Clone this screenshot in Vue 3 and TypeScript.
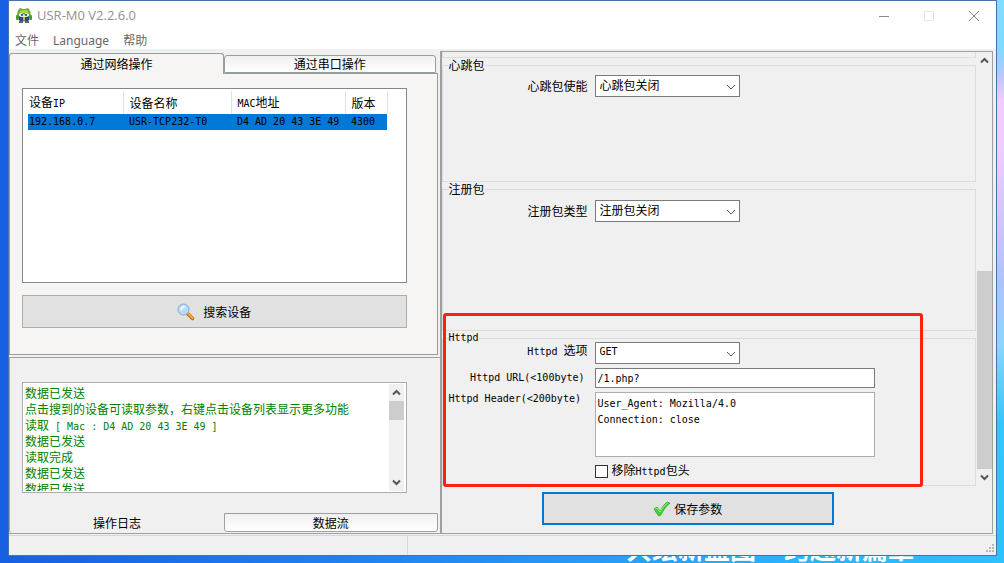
<script setup lang="ts">
import { h, ref, type FunctionalComponent } from 'vue'

interface Device {
  ip: string
  name: string
  mac: string
  version: string
}

// Sets Latin runs in the half-width face beside full-width characters.
const MixedText: FunctionalComponent<{ text: string }> = (props) =>
  props.text
    .split(/([\x20-\x7e]+)/)
    .filter((part) => part.length > 0)
    .map((part) => h('span', { class: /^[\x20-\x7e]/.test(part) ? 'half' : 'full' }, part))
MixedText.props = ['text']

const menus = ['文件', 'Language', '帮助']
const columns = ['设备IP', '设备名称', 'MAC地址', '版本']
const devices: Device[] = [
  { ip: '192.168.0.7', name: 'USR-TCP232-T0', mac: 'D4 AD 20 43 3E 49', version: '4300' },
]
const logLines = [
  '数据已发送',
  '点击搜到的设备可读取参数，右键点击设备列表显示更多功能',
  '读取 [ Mac : D4 AD 20 43 3E 49 ]',
  '数据已发送',
  '读取完成',
  '数据已发送',
  '数据已发送',
]

const heartbeat = ref('心跳包关闭')
const register = ref('注册包关闭')
const method = ref('GET')
const url = ref('/1.php?')
const header = ref('User_Agent: Mozilla/4.0\nConnection: close')
const strip = ref(false)
</script>

<template>
  <div class="desktop">
    <p class="slogan"><span>共绘新蓝图</span><span>跨越新篇章</span></p>
    <div class="window">
      <header class="titlebar">
        <svg class="app-icon" viewBox="0 0 16 16" aria-hidden="true">
          <path d="M1 10C1 4 3 2 4 1l3 1h2l3-1c1 1 3 3 3 9z" fill="#6fae33" />
          <path d="M4 4q4-2 8 0v2H4z" fill="#a8d458" />
          <rect x="0" y="8" width="3" height="5" rx="1" fill="#4c9a35" />
          <rect x="13" y="8" width="3" height="5" rx="1" fill="#4c9a35" />
          <path d="M3 9h10v4l-2 2H9l-1-2-1 2H5l-2-2z" fill="#294c7d" />
          <path d="M3 7q2-2 4 0t2 0 4 0v2l-2 1H5L3 9z" fill="#e9efc0" />
          <path d="M5 7h2v2H5zM9 7h2v2H9z" fill="#3d6a8c" />
          <path d="M7 10h2v3H7z" fill="#d8b25a" />
          <path d="M3 14h4v2H3zM9 14h4v2H9z" fill="#5c6470" />
        </svg>
        <h1>USR-M0 V2.2.6.0</h1>
        <div class="caption">
          <button type="button" aria-label="Minimize">
            <svg viewBox="0 0 12 12"><path d="M1 6.500h10" stroke="#8a8a8a" /></svg>
          </button>
          <button type="button" aria-label="Maximize" disabled>
            <svg viewBox="0 0 12 12"><path d="M1.500 1.500h9v9h-9z" fill="none" stroke="#e6e6e6" /></svg>
          </button>
          <button type="button" aria-label="Close">
            <svg viewBox="0 0 12 12"><path d="M1 1l10 10M11 1L1 11" stroke="#858585" /></svg>
          </button>
        </div>
      </header>
      <nav class="menubar">
        <button v-for="m in menus" :key="m" type="button">{{ m }}</button>
      </nav>

      <main class="main">
        <section class="left">
          <div class="tabs top" role="tablist">
            <button type="button" role="tab" aria-selected="true" class="tab active">通过网络操作</button>
            <button type="button" role="tab" aria-selected="false" class="tab">通过串口操作</button>
          </div>
          <div class="search-pane">
            <div class="list">
              <table>
                <thead>
                  <tr>
                    <th v-for="c in columns" :key="c" scope="col"><MixedText :text="c" /></th>
                    <th class="rest" aria-hidden="true"></th>
                  </tr>
                </thead>
                <tbody>
                  <tr v-for="d in devices" :key="d.ip">
                    <td>{{ d.ip }}</td>
                    <td>{{ d.name }}</td>
                    <td>{{ d.mac }}</td>
                    <td>{{ d.version }}</td>
                    <td class="rest"></td>
                  </tr>
                </tbody>
              </table>
            </div>
            <button type="button" class="search">
              <svg width="18" height="18" viewBox="0 0 18 18" aria-hidden="true">
                <path d="M11 11l4.500 4.500" stroke="#b96f16" stroke-width="3.500" stroke-linecap="round" />
                <path d="M11.500 11l4 4" stroke="#f5a92e" stroke-width="2" stroke-linecap="round" />
                <circle cx="6.500" cy="6.500" r="5.500" fill="#b5dcf8" stroke="#8fa5cc" />
                <path d="M3 6q1-3 4-3.500l1.500 2Q5 5 4 8z" fill="#eef8ff" />
              </svg>
              <span>搜索设备</span>
            </button>
          </div>

          <div class="log-pane">
            <div class="log">
              <div class="log-text" role="log">
                <p v-for="(line, i) in logLines" :key="i"><MixedText :text="line" /></p>
              </div>
              <div class="scroll">
                <button type="button" aria-label="Scroll up">
                  <svg viewBox="0 0 9 9"><path d="M1 6.500L4.500 3 8 6.500" /></svg>
                </button>
                <div class="thumb small"></div>
                <button type="button" class="end" aria-label="Scroll down">
                  <svg viewBox="0 0 9 9"><path d="M1 2.500L4.500 6 8 2.500" /></svg>
                </button>
              </div>
            </div>
          </div>
          <div class="tabs bottom" role="tablist">
            <button type="button" role="tab" aria-selected="true" class="tab active">操作日志</button>
            <button type="button" role="tab" aria-selected="false" class="tab">数据流</button>
          </div>
        </section>

        <form class="right" @submit.prevent>
          <div class="params">
            <div class="groups">
              <div class="group-tail"></div>
              <fieldset class="heartbeat">
                <legend>心跳包</legend>
                <div class="row">
                  <label for="heartbeat">心跳包使能</label>
                  <div class="select">
                    <select id="heartbeat" v-model="heartbeat"><option>心跳包关闭</option></select>
                    <svg viewBox="0 0 10 6"><path d="M1 1l4 4 4-4" /></svg>
                  </div>
                </div>
              </fieldset>
              <fieldset class="register">
                <legend>注册包</legend>
                <div class="row">
                  <label for="register">注册包类型</label>
                  <div class="select">
                    <select id="register" v-model="register"><option>注册包关闭</option></select>
                    <svg viewBox="0 0 10 6"><path d="M1 1l4 4 4-4" /></svg>
                  </div>
                </div>
              </fieldset>
              <div class="marked">
                <fieldset class="httpd">
                  <legend class="half">Httpd</legend>
                  <div class="row">
                    <label for="method" class="raised"><MixedText text="Httpd 选项" /></label>
                    <div class="select">
                      <select id="method" v-model="method" class="half"><option>GET</option></select>
                      <svg viewBox="0 0 10 6"><path d="M1 1l4 4 4-4" /></svg>
                    </div>
                  </div>
                  <div class="row">
                    <label for="url" class="half inset">Httpd URL(&lt;100byte)</label>
                    <input id="url" v-model="url" type="text" class="half" />
                  </div>
                  <div class="row start">
                    <label for="header" class="half wide">Httpd Header(&lt;200byte)</label>
                    <textarea id="header" v-model="header" class="half" spellcheck="false"></textarea>
                  </div>
                  <div class="row">
                    <label class="check"><input v-model="strip" type="checkbox" /><span><MixedText text="移除Httpd包头" /></span></label>
                  </div>
                </fieldset>
                <div class="marker"></div>
              </div>
            </div>
            <div class="scroll">
              <button type="button" aria-label="Scroll up">
                <svg viewBox="0 0 9 9"><path d="M1 6.500L4.500 3 8 6.500" /></svg>
              </button>
              <div class="track"></div>
              <div class="thumb large"></div>
              <button type="button" class="end" aria-label="Scroll down">
                <svg viewBox="0 0 9 9"><path d="M1 2.500L4.500 6 8 2.500" /></svg>
              </button>
            </div>
          </div>
          <div class="actions">
            <button type="submit" class="save">
              <svg width="18" height="16" viewBox="0 0 18 16" aria-hidden="true">
                <path d="M1 8l3-2 3 4q3-6 7-9l3 1Q11 7 7.500 14.500L5.500 15z" fill="#40cf35" stroke="#2f9f2b" stroke-width=".7" stroke-linejoin="round" />
                <path d="M2.500 8l1.500-.8L7 11q3-6 7.500-9" stroke="#98ef83" fill="none" />
              </svg>
              <span>保存参数</span>
            </button>
          </div>
        </form>
      </main>
      <footer class="status">
        <div></div>
        <div>
          <svg width="9" height="9" viewBox="0 0 9 9" aria-hidden="true">
            <path d="M6 0h2v2H6zM3 3h2v2H3zM6 3h2v2H6zM0 6h2v2H0zM3 6h2v2H3zM6 6h2v2H6z" fill="#b8b8b8" />
          </svg>
        </div>
      </footer>
    </div>
  </div>
</template>

<style>
body {
  margin: 0;
}
</style>

<style scoped>
.desktop,
.desktop * {
  box-sizing: border-box;
}
.desktop {
  position: relative;
  display: flex;
  min-height: 100vh;
  padding: 0 7px 7px 8px;
  overflow: hidden;
  background:
    linear-gradient(170deg, #86dcff 0, #83d8ff 50px, #b9c6f8 75px, #f0cdf8 100px, #f0cdf8 150px, #c5c3f8 240px, #a9c4f8 285px, #8fd3fb 340px, #35c5fb 420px, #2cc0fd 100%) right / 8px 100% no-repeat,
    linear-gradient(90deg, #165fe3 0, #1c72ec 20%, #2490f4 50%, #29b4fb 80%, #2cc0fd 100%);
  font: 12px/14px "Noto Sans CJK SC", sans-serif;
  color: #000;
}
button,
input,
select,
textarea {
  margin: 0;
  font: inherit;
  color: inherit;
}
button {
  padding: 0;
  border: 0;
  background: none;
}
.half,
:deep(.half) {
  font-family: "DejaVu Sans Mono", "Liberation Mono", monospace;
  font-size: 10px;
  white-space: pre;
}
.slogan {
  position: absolute;
  right: 90px;
  bottom: 0;
  display: flex;
  gap: 28px;
  margin: 0;
  font-size: 26px;
  line-height: 30px;
  font-weight: 700;
  color: #fff;
}
.window {
  position: relative;
  display: flex;
  flex: 1;
  flex-direction: column;
  min-width: 0;
  border: 1px solid #4673a8;
  background: #f0f0f0;
}
.titlebar {
  display: flex;
  align-items: center;
  height: 28px;
  padding-left: 7px;
  background: #fff;
}
.app-icon {
  width: 16px;
  height: 16px;
}
h1 {
  flex: 1;
  margin: 0 0 0 5px;
  font: 13px/16px "Open Sans", sans-serif;
  color: #929292;
}
.caption {
  display: flex;
  align-self: stretch;
}
.caption button {
  width: 45px;
}
.caption svg {
  width: 12px;
  height: 12px;
  vertical-align: middle;
}
.menubar {
  display: flex;
  gap: 14px;
  height: 20px;
  padding: 4px 6px 0;
  background: #fff;
  font: 12px/16px "Noto Sans", "Noto Sans CJK SC", sans-serif;
  color: #666;
}
.main {
  display: grid;
  flex: 1;
  grid-template-columns: minmax(0, 7fr) minmax(0, 9fr);
  padding: 2px 3px 1px 0;
}
.left {
  display: flex;
  flex-direction: column;
  background: #f0f0f0;
}
.tabs {
  display: grid;
  grid-template-columns: 215px minmax(0, 1fr);
}
.tab {
  position: relative;
  border: 1px solid #939f9c;
  background: linear-gradient(#f0f0f0, #fff);
}
.tabs.top {
  height: 20px;
  margin: 2px 4px 0 0;
}
.tabs.top .tab {
  margin-top: 2px;
  border-radius: 3px 3px 0 0;
}
.tabs.top .active {
  z-index: 1;
  margin: 0 0 -1px;
  border-bottom: 0;
  background: #f7f5f3;
}
.search-pane {
  flex: 1;
  display: flex;
  flex-direction: column;
  margin-right: 2px;
  padding: 14px 30px 26px 12px;
  border: 1px solid #939f9c;
  background: #f7f5f3;
}
.list {
  flex: 1;
  padding: 2px 5px;
  border: 1px solid #82878f;
  background: #fff;
}
table {
  width: 100%;
  border-collapse: collapse;
  table-layout: fixed;
}
th,
td {
  padding: 0 0 0 6px;
  text-align: left;
  font-weight: 400;
  white-space: nowrap;
}
th:first-child,
td:first-child {
  width: 95px;
  padding-left: 1px;
}
th:nth-child(2) {
  width: 108px;
}
th:nth-child(3) {
  width: 114px;
}
th:nth-child(4) {
  width: 42px;
}
th {
  height: 23px;
  border-right: 1px solid #e3e3e3;
}
.rest {
  border: 0;
  padding: 0;
}
td {
  height: 16px;
  background: #0078d7;
  font: 10px/16px "DejaVu Sans Mono", monospace;
}
td.rest {
  background: none;
}
.search {
  display: flex;
  align-items: center;
  justify-content: center;
  gap: 8px;
  height: 33px;
  margin-top: 12px;
  border: 1px solid #adadad;
  background: #e1e1e1;
}
.log-pane {
  flex: none;
  display: flex;
  margin-top: 2px;
  padding: 24px 33px 20px 12px;
  border: solid #a0a0a0;
  border-width: 1px 0 0 1px;
}
.log {
  display: flex;
  flex: 1;
  min-width: 0;
  height: 111px;
  padding: 1px 2px 1px 1px;
  border: 1px solid #abadb3;
  background: #fff;
}
.log-text {
  flex: 1;
  height: 107px;
  overflow: hidden;
  color: #008000;
}
.log-text p {
  height: 16px;
  margin: 0;
  padding-left: 1px;
  line-height: 18px;
  white-space: nowrap;
}
.scroll {
  display: flex;
  flex: none;
  flex-direction: column;
  width: 15px;
  background: #f0f0f0;
}
.scroll button {
  height: 17px;
}
.scroll .end {
  margin-top: auto;
}
.scroll svg {
  display: block;
  width: 9px;
  height: 9px;
  margin: 0 auto;
  fill: none;
  stroke: #555;
  stroke-width: 2;
}
.thumb {
  background: #cdcdcd;
}
.small {
  height: 19px;
}
.track {
  flex: 202;
}
.large {
  flex: 199;
}
.tabs.bottom {
  height: 21px;
  padding-right: 2px;
  border-bottom: 1px solid #a0a0a0;
}
.tabs.bottom .tab {
  margin-bottom: 1px;
  border-color: #a0a0a0;
  border-radius: 0 0 3px 3px;
}
.tabs.bottom .active {
  margin-bottom: 0;
  border-top: 0;
  border-bottom: 0;
  border-right: 0;
  background: #f0f0f0;
}
.right {
  display: flex;
  flex-direction: column;
  border: 1px solid #a0a0a0;
  border-left-width: 2px;
}
.params {
  display: flex;
}
.groups {
  flex: 1;
  min-width: 0;
  margin-right: 1px;
}
.group-tail {
  height: 6px;
  border: 1px solid #dcdcdc;
  border-top: 0;
}
fieldset {
  min-width: 0;
  margin: 0;
  padding: 0 6px;
  border: 1px solid #dcdcdc;
}
legend {
  height: 14px;
  padding: 0;
  line-height: 14px;
}
.heartbeat {
  min-height: 124px;
  padding-top: 3px;
}
.register {
  min-height: 149px;
  padding-top: 4px;
}
.httpd {
  min-height: 155px;
  padding-bottom: 2px;
}
.row {
  display: grid;
  grid-template-columns: 139px minmax(0, 280px);
  column-gap: 7px;
  align-items: center;
}
.httpd legend + .row {
  margin-top: -3px;
}
.httpd .row + .row {
  margin-top: 4px;
}
.row.start {
  align-items: start;
}
label {
  text-align: right;
  white-space: nowrap;
}
.raised {
  padding-bottom: 4px;
}
.inset {
  padding-right: 3px;
}
.wide {
  text-align: left;
}
.select {
  position: relative;
  width: 145px;
}
.select svg {
  position: absolute;
  right: 4px;
  top: 9px;
  width: 10px;
  height: 6px;
  fill: none;
  stroke: #555;
  pointer-events: none;
}
select {
  display: block;
  width: 100%;
  height: 22px;
  padding: 0 20px 3px 4px;
  border: 1px solid #7a7a7a;
  border-radius: 0;
  background: #fff;
  appearance: none;
}
input[type='text'] {
  width: 100%;
  height: 20px;
  padding: 0 2px;
  border: 1px solid #7a7a7a;
  border-radius: 0;
}
textarea {
  display: block;
  width: 100%;
  height: 65px;
  padding: 3px 2px;
  border: 1px solid #abadb3;
  line-height: 16px;
  resize: none;
}
.check {
  display: flex;
  grid-column: 2;
  align-items: center;
  gap: 4px;
  height: 20px;
}
input[type='checkbox'] {
  width: 13px;
  height: 13px;
  border: 1px solid #333;
  background: #fff;
  appearance: none;
}
input[type='checkbox']:checked {
  background: #0078d7;
}
.marked {
  position: relative;
}
.marker {
  position: absolute;
  inset: -18px 53px -1px 1px;
  border: 3px solid #ff2010;
  border-radius: 3px;
  pointer-events: none;
}
.actions {
  display: flex;
  flex: 1;
  align-items: flex-start;
  padding: 6px 158px 0 100px;
}
.save {
  display: flex;
  flex: 1;
  align-items: center;
  justify-content: center;
  gap: 3px;
  height: 33px;
  border: 2px solid #0078d7;
  background: #e1e1e1;
}
.status {
  display: flex;
  height: 20px;
  border-top: 1px solid #d7d7d7;
}
.status div:first-child {
  width: 399px;
  border-right: 1px solid #d7d7d7;
}
.status div:last-child {
  display: flex;
  flex: 1;
  align-items: flex-end;
  justify-content: flex-end;
  padding: 0 1px 2px 0;
}
</style>
